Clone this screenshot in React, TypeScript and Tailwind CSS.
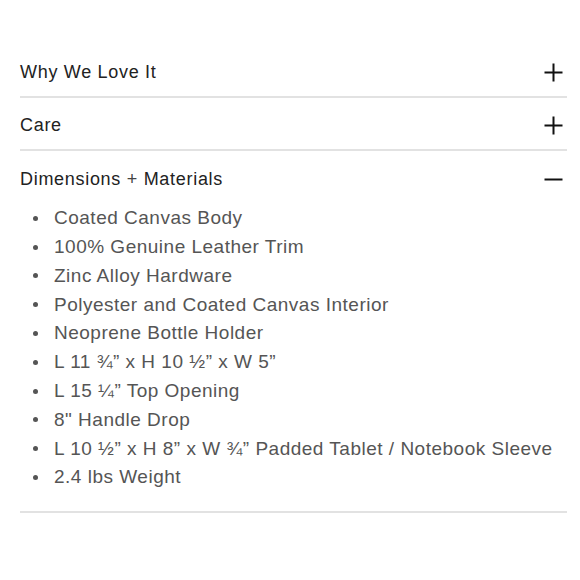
import React from "react";

const items = [
  "Coated Canvas Body",
  "100% Genuine Leather Trim",
  "Zinc Alloy Hardware",
  "Polyester and Coated Canvas Interior",
  "Neoprene Bottle Holder",
  "L 11 ¾” x H 10 ½” x W 5”",
  "L 15 ¼” Top Opening",
  "8\" Handle Drop",
  "L 10 ½” x H 8” x W ¾” Padded Tablet / Notebook Sleeve",
  "2.4 lbs Weight",
];

function Plus() {
  return (
    <svg width="19" height="19" viewBox="0 0 19 19" className="text-[#111]">
      <path d="M9.5 0.5v18M0.5 9.5h18" stroke="currentColor" strokeWidth="2" />
    </svg>
  );
}

function Minus() {
  return (
    <svg width="19" height="19" viewBox="0 0 19 19" className="text-[#111]">
      <path d="M0.5 9.5h18" stroke="currentColor" strokeWidth="2" />
    </svg>
  );
}

export default function App() {
  return (
    <div
      className="w-[580px] h-[580px] bg-white pt-[46px] pl-5 pr-[13px]"
      style={{ fontFamily: '"Liberation Sans", Arial, sans-serif' }}
    >
      <div className="flex items-center justify-between h-[52px] pt-[2px] border-b-2 border-[#e2e2e2]">
        <span className="text-[18px] tracking-[0.7px] text-[#222]">Why We Love It</span>
        <span className="mr-[4px]">
          <Plus />
        </span>
      </div>
      <div className="flex items-center justify-between h-[53px] pt-[3px] border-b-2 border-[#e2e2e2]">
        <span className="text-[18px] tracking-[0.7px] text-[#222]">Care</span>
        <span className="mr-[4px]">
          <Plus />
        </span>
      </div>
      <div className="border-b-2 border-[#e2e2e2] pb-[19px]">
        <div className="flex items-center justify-between h-[53px] pt-[3px]">
          <span className="text-[18px] tracking-[0.7px] text-[#222]">
            Dimensions <span className="font-light text-[#444]">+</span> Materials
          </span>
          <span className="mr-[4px]">
            <Minus />
          </span>
        </div>
        <ul className="flex flex-col">
          {items.map((t, i) => (
            <li key={i} className="flex items-center h-[28.8px]">
              <span className="w-[5px] h-[5px] rounded-full bg-[#555] ml-[13px] mr-[16px]" />
              <span className="text-[19px] tracking-[0.5px] text-[#555] whitespace-nowrap">{t}</span>
            </li>
          ))}
        </ul>
      </div>
    </div>
  );
}
